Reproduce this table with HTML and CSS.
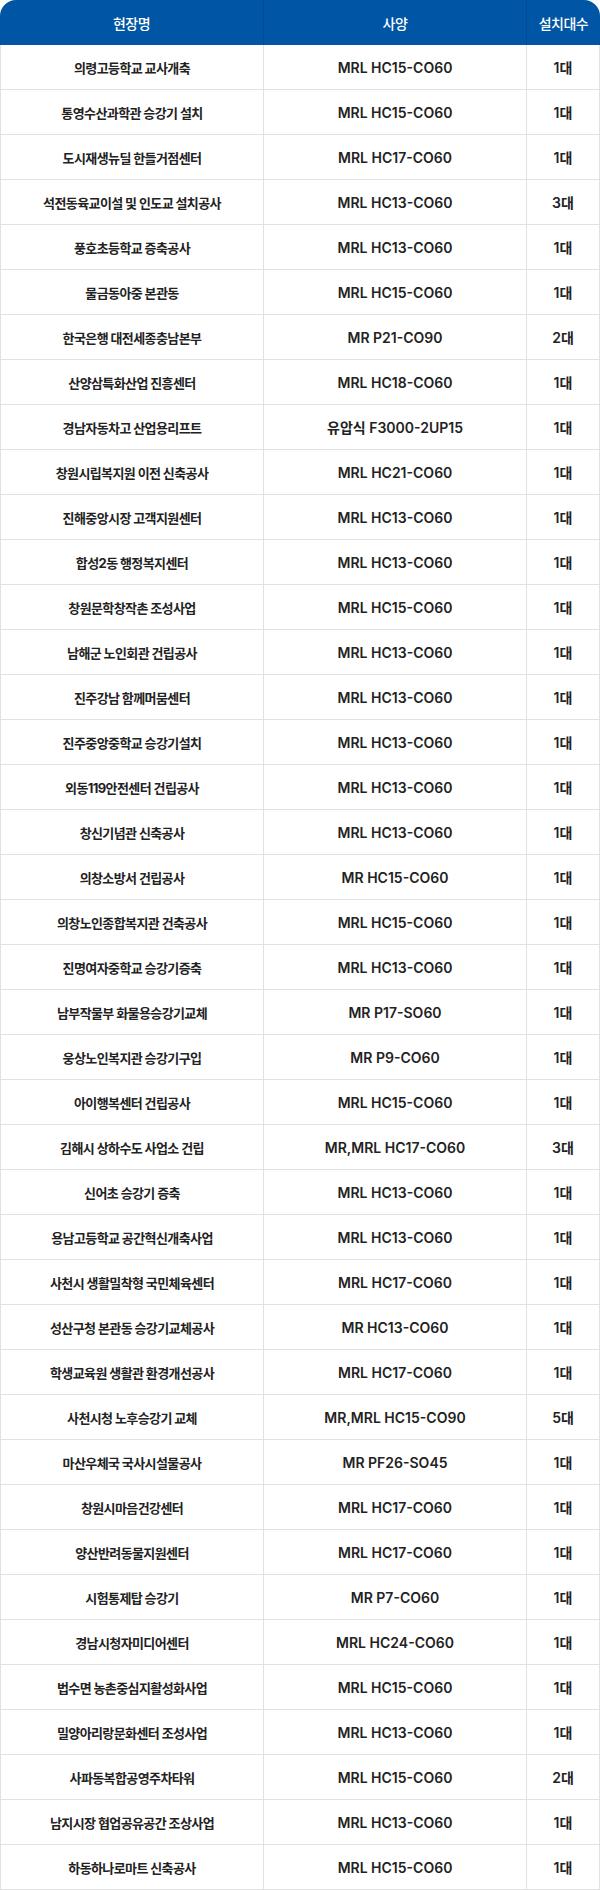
FILE: index.html
```html
<!DOCTYPE html>
<html lang="ko">
<head>
<meta charset="utf-8">
<title>납품실적</title>
<link rel="stylesheet" href="styles.css">
</head>
<body>
<table class="record">
  <colgroup>
    <col class="c-name">
    <col class="c-spec">
    <col class="c-qty">
  </colgroup>
  <thead>
    <tr><th>현장명</th><th>사양</th><th>설치대수</th></tr>
  </thead>
  <tbody>
    <tr><td>의령고등학교 교사개축</td><td>MRL HC15-CO60</td><td>1대</td></tr>
    <tr><td>통영수산과학관 승강기 설치</td><td>MRL HC15-CO60</td><td>1대</td></tr>
    <tr><td>도시재생뉴딜 한들거점센터</td><td>MRL HC17-CO60</td><td>1대</td></tr>
    <tr><td>석전동육교이설 및 인도교 설치공사</td><td>MRL HC13-CO60</td><td>3대</td></tr>
    <tr><td>풍호초등학교 증축공사</td><td>MRL HC13-CO60</td><td>1대</td></tr>
    <tr><td>물금동아중 본관동</td><td>MRL HC15-CO60</td><td>1대</td></tr>
    <tr><td>한국은행 대전세종충남본부</td><td>MR P21-CO90</td><td>2대</td></tr>
    <tr><td>산양삼특화산업 진흥센터</td><td>MRL HC18-CO60</td><td>1대</td></tr>
    <tr><td>경남자동차고 산업용리프트</td><td>유압식 F3000-2UP15</td><td>1대</td></tr>
    <tr><td>창원시립복지원 이전 신축공사</td><td>MRL HC21-CO60</td><td>1대</td></tr>
    <tr><td>진해중앙시장 고객지원센터</td><td>MRL HC13-CO60</td><td>1대</td></tr>
    <tr><td>합성2동 행정복지센터</td><td>MRL HC13-CO60</td><td>1대</td></tr>
    <tr><td>창원문학창작촌 조성사업</td><td>MRL HC15-CO60</td><td>1대</td></tr>
    <tr><td>남해군 노인회관 건립공사</td><td>MRL HC13-CO60</td><td>1대</td></tr>
    <tr><td>진주강남 함께머뭄센터</td><td>MRL HC13-CO60</td><td>1대</td></tr>
    <tr><td>진주중앙중학교 승강기설치</td><td>MRL HC13-CO60</td><td>1대</td></tr>
    <tr><td>외동119안전센터 건립공사</td><td>MRL HC13-CO60</td><td>1대</td></tr>
    <tr><td>창신기념관 신축공사</td><td>MRL HC13-CO60</td><td>1대</td></tr>
    <tr><td>의창소방서 건립공사</td><td>MR HC15-CO60</td><td>1대</td></tr>
    <tr><td>의창노인종합복지관 건축공사</td><td>MRL HC15-CO60</td><td>1대</td></tr>
    <tr><td>진명여자중학교 승강기증축</td><td>MRL HC13-CO60</td><td>1대</td></tr>
    <tr><td>남부작물부 화물용승강기교체</td><td>MR P17-SO60</td><td>1대</td></tr>
    <tr><td>웅상노인복지관 승강기구입</td><td>MR P9-CO60</td><td>1대</td></tr>
    <tr><td>아이행복센터 건립공사</td><td>MRL HC15-CO60</td><td>1대</td></tr>
    <tr><td>김해시 상하수도 사업소 건립</td><td>MR,MRL HC17-CO60</td><td>3대</td></tr>
    <tr><td>신어초 승강기 증축</td><td>MRL HC13-CO60</td><td>1대</td></tr>
    <tr><td>용남고등학교 공간혁신개축사업</td><td>MRL HC13-CO60</td><td>1대</td></tr>
    <tr><td>사천시 생활밀착형 국민체육센터</td><td>MRL HC17-CO60</td><td>1대</td></tr>
    <tr><td>성산구청 본관동 승강기교체공사</td><td>MR HC13-CO60</td><td>1대</td></tr>
    <tr><td>학생교육원 생활관 환경개선공사</td><td>MRL HC17-CO60</td><td>1대</td></tr>
    <tr><td>사천시청 노후승강기 교체</td><td>MR,MRL HC15-CO90</td><td>5대</td></tr>
    <tr><td>마산우체국 국사시설물공사</td><td>MR PF26-SO45</td><td>1대</td></tr>
    <tr><td>창원시마음건강센터</td><td>MRL HC17-CO60</td><td>1대</td></tr>
    <tr><td>양산반려동물지원센터</td><td>MRL HC17-CO60</td><td>1대</td></tr>
    <tr><td>시험통제탑 승강기</td><td>MR P7-CO60</td><td>1대</td></tr>
    <tr><td>경남시청자미디어센터</td><td>MRL HC24-CO60</td><td>1대</td></tr>
    <tr><td>법수면 농촌중심지활성화사업</td><td>MRL HC15-CO60</td><td>1대</td></tr>
    <tr><td>밀양아리랑문화센터 조성사업</td><td>MRL HC13-CO60</td><td>1대</td></tr>
    <tr><td>사파동복합공영주차타워</td><td>MRL HC15-CO60</td><td>2대</td></tr>
    <tr><td>남지시장 협업공유공간 조상사업</td><td>MRL HC13-CO60</td><td>1대</td></tr>
    <tr><td>하동하나로마트 신축공사</td><td>MRL HC15-CO60</td><td>1대</td></tr>
  </tbody>
</table>
</body>
</html>
```
FILE: styles.css
```css
html, body {
  margin: 0;
  padding: 0;
  background: #ffffff;
}

.record {
  width: 600px;
  border-collapse: separate;
  border-spacing: 0;
  table-layout: fixed;
  font-family: "Inter", "Noto Sans CJK KR", sans-serif;
  color: #222222;
}

.c-name { width: 264px; }
.c-spec { width: 263px; }
.c-qty { width: 73px; }

.record th {
  height: 45px;
  padding: 0;
  background: #0055a5;
  color: #ffffff;
  font-size: 14px;
  font-weight: 500;
  letter-spacing: -0.5px;
  text-align: center;
  vertical-align: middle;
  border-right: 1px solid #004a92;
}

.record th:first-child {
  border-top-left-radius: 16px;
}

.record th:last-child {
  border-right: none;
  border-top-right-radius: 16px;
}

.record td {
  height: 44px;
  padding: 0;
  text-align: center;
  vertical-align: middle;
  font-size: 14px;
  font-weight: 600;
  border-right: 1px solid #e2e2e2;
  border-bottom: 1px solid #e2e2e2;
  white-space: nowrap;
}

.record td:first-child {
  border-left: 1px solid #e2e2e2;
  font-size: 13px;
  font-weight: 700;
  letter-spacing: -0.6px;
}

.record td:last-child {
  font-size: 14px;
}
```
